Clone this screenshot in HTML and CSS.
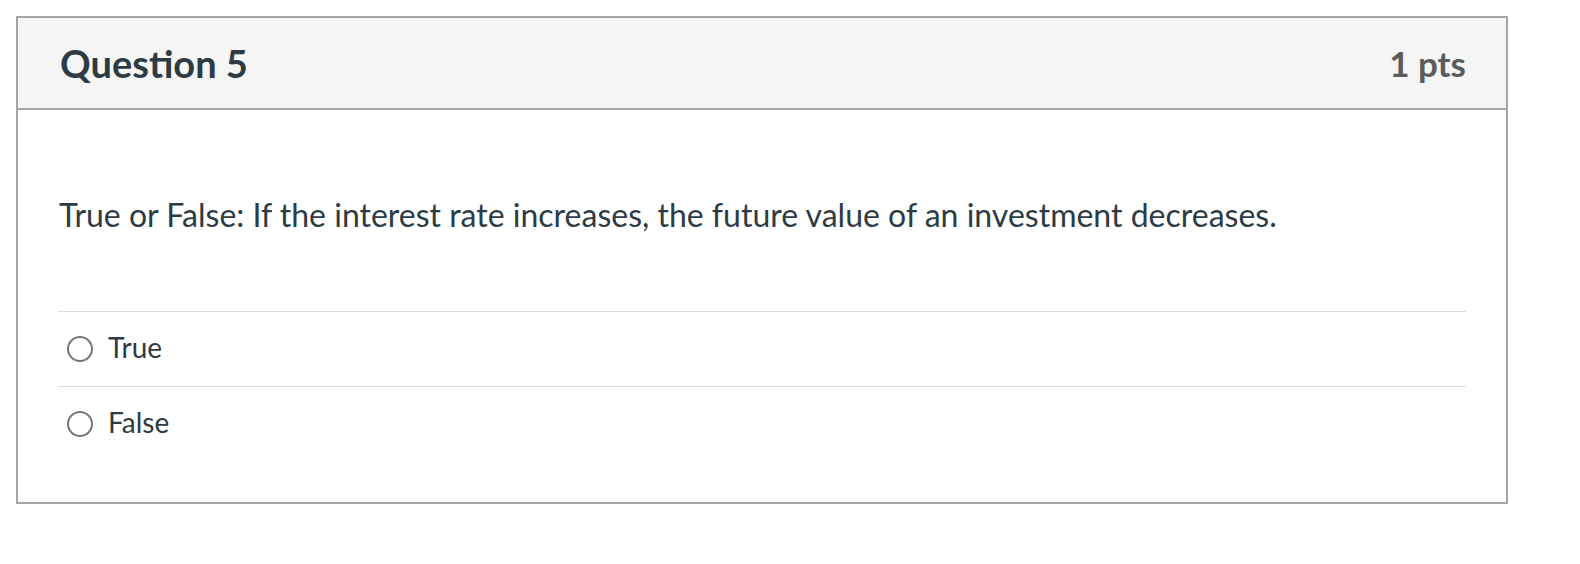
FILE: index.html
```html
<!DOCTYPE html>
<html>
<head>
<meta charset="utf-8">
<link rel="stylesheet" href="styles.css">
</head>
<body>
<div class="question">
  <div class="header">
    <h2 class="title">Question 5</h2>
    <div class="points">1 pts</div>
  </div>
  <div class="content">
    <p class="text">True or False: If the interest rate increases, the future value of an investment decreases.</p>
    <div class="answers">
      <label class="answer"><span class="radio"></span><span class="label">True</span></label>
      <label class="answer"><span class="radio"></span><span class="label">False</span></label>
    </div>
  </div>
</div>
</body>
</html>
```

FILE: styles.css
```css
html, body {
  margin: 0;
  padding: 0;
  background: #ffffff;
}
body {
  padding: 16px;
  font-family: Lato, "Noto Sans", sans-serif;
  color: #2d3b45;
}
.question {
  box-sizing: border-box;
  width: 1492px;
  height: 488px;
  border: 2px solid #a5a5a5;
  display: flex;
  flex-direction: column;
}
.header {
  box-sizing: border-box;
  height: 92px;
  background: #f5f5f5;
  border-bottom: 2px solid #a5a5a5;
  display: flex;
  align-items: center;
  justify-content: space-between;
  padding: 0 40px 0 42px;
}
.title {
  margin: 0;
  font-size: 38px;
  font-weight: 700;
  color: #2d3b45;
  line-height: 1;
}
.points {
  font-size: 35px;
  font-weight: 700;
  color: #5b5b5b;
  line-height: 1;
}
.content {
  padding: 81px 40px 0 40px;
}
.text {
  margin: 0 0 0 1px;
  font-size: 32px;
  line-height: 1.5;
}
.answers {
  margin-top: 72px;
}
.answer {
  display: flex;
  align-items: center;
  height: 74px;
  border-top: 1.5px solid #dcdcdc;
}
.radio {
  box-sizing: border-box;
  width: 26px;
  height: 26px;
  border: 2px solid #777;
  border-radius: 50%;
  margin-left: 9px;
  margin-right: 15px;
}
.label {
  font-size: 28px;
  line-height: 1.5;
  padding-bottom: 4px;
  color: #2d3b45;
}
```
